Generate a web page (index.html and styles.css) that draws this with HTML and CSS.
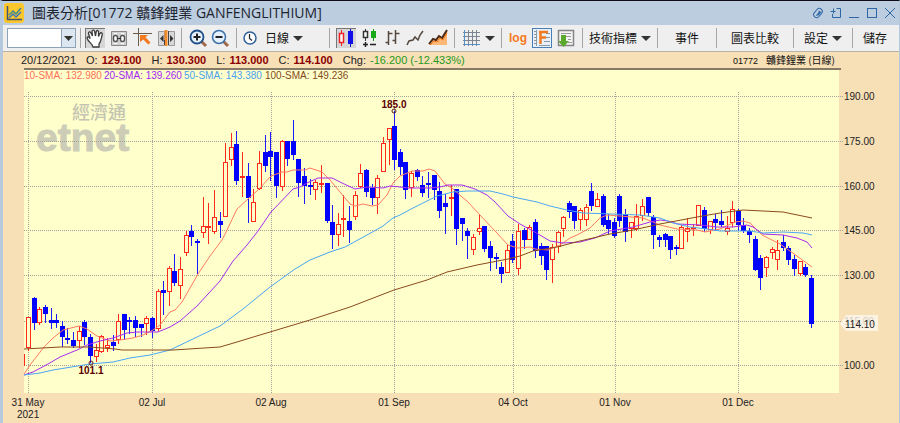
FILE: index.html
```html
<!DOCTYPE html>
<html lang="zh-Hant">
<head>
    <meta charset="UTF-8">
    <meta name="viewport" content="width=device-width, initial-scale=1.0">
    <title>圖表分析[01772 贛鋒鋰業 GANFENGLITHIUM]</title>
    <link rel="stylesheet" href="styles.css">
</head>
<body>
    <div class="window">
        <header class="titlebar">
            <svg class="app-icon" viewBox="0 0 20 20">
                <rect width="20" height="20" rx="3" fill="#fcc62d"/>
                <path d="M3.5 3v13.5H18" fill="none" stroke="#44536b" stroke-width="1.5"/>
                <path d="M5 12l4-4 3 3 5-6" fill="none" stroke="#3c8c8c" stroke-width="1.5"/>
                <path d="M5 15l4-4 3 3 5-5" fill="none" stroke="#3a78b8" stroke-width="1.5"/>
            </svg>
            <h1>圖表分析[01772 贛鋒鋰業 GANFENGLITHIUM]</h1>
            <div class="window-buttons">
                <button aria-label="Pin"><svg viewBox="0 0 12 12"><g transform="rotate(40 6 6)"><rect x="3" y="1" width="6" height="10" rx="3"/><path d="M5 4h1.500v5M7.500 3v5"/></g></svg></button>
                <button aria-label="Pop out"><svg viewBox="0 0 12 12"><path d="M6.500 1.500h4v9h-8V7M.5 4.500h5M3.500 1.500v5"/></svg></button>
                <button aria-label="Minimize"><svg viewBox="0 0 12 12"><path d="M1 10.500h10"/></svg></button>
                <button aria-label="Maximize"><svg viewBox="0 0 12 12"><rect x="1.500" y="1.500" width="9" height="9"/></svg></button>
                <button aria-label="Close"><svg viewBox="0 0 12 12"><path d="M1 1l10 10M11 1L1 11"/></svg></button>
            </div>
        </header>

        <nav class="toolbar">
            <div class="group group-tight">
                <select class="combo" aria-label="Stock code"><option></option></select>
            </div>
            <div class="group group-tools">
                <button class="tool pressed" aria-label="Pan"><svg viewBox="0 0 20 20"><path d="M8 19c0-3-5-5-6-9 .2-1.800 2-1.500 3.200.6L3.500 5.500c-.2-1.800 1.800-2.200 2.500-.5L7.500 8 7 3.500c.2-1.800 2.300-1.800 2.600 0L10.500 8l.8-4.500c.4-1.600 2.500-1.200 2.300.6L13.500 8.500l1.500-3c.9-1.400 2.700-.6 2.200 1.200-1 3.300-.7 6.300-3.200 9.300v3z" fill="#fff" stroke="#3c3c3c" stroke-width="1.300"/></svg></button>
                <button class="tool" aria-label="Fit"><svg viewBox="0 0 20 20"><path d="M2.500 3.500h15v14h-15z" fill="#d2d2d2" stroke="#888"/><path d="M5 5.500h3M12 5.500h3M5 15.500h3M12 15.500h3" stroke="#fff"/><rect x="4.500" y="7.500" width="4" height="6" rx="2" fill="#fff" stroke="#555" stroke-width="1.500"/><rect x="11.500" y="7.500" width="4" height="6" rx="2" fill="#fff" stroke="#555" stroke-width="1.500"/><path d="M8 10.500h4" stroke="#333"/></svg></button>
                <button class="tool" aria-label="Crosshair"><svg viewBox="0 0 20 20"><path d="M0 5.500h19M5.500 0v18" stroke="#6b5b4b"/><path d="M7 7h8l-2.500 2.200 5 5.300-2.200 2-5-5L7 14z" fill="#f47a20"/></svg></button>
                <button class="tool" aria-label="Spacing"><svg viewBox="0 0 20 20"><path d="M1.500 3.500h6v14h-6zM11.500 3.500h6v14h-6z" fill="#d8d8d8" stroke="#999"/><path d="M9 2v16" stroke="#f58a2a" stroke-width="3"/><path d="M11.500 3v14M7.500 12v5" stroke="#444"/><path d="M6.500 7v7L3 10.500zM13 7v7l3.500-3.500z" fill="#333"/></svg></button>
            </div>
            <div class="group group-zoom">
                <button class="tool" aria-label="Zoom in"><svg viewBox="0 0 20 20"><path d="M13 13l5 5" stroke="#a0694a" stroke-width="3"/><circle cx="9" cy="9" r="6.500" fill="#e6f1fb" stroke="#1f4f8a" stroke-width="1.800"/><path d="M5.500 9h7M9 5.500v7" stroke="#222" stroke-width="2"/></svg></button>
                <button class="tool" aria-label="Zoom out"><svg viewBox="0 0 20 20"><path d="M13 13l5 5" stroke="#a0694a" stroke-width="3"/><circle cx="9" cy="9" r="6.500" fill="#e6f1fb" stroke="#3b70ad" stroke-width="1.500"/><path d="M5.500 9h7" stroke="#222" stroke-width="2"/></svg></button>
            </div>
            <div class="group group-period">
                <button class="menu menu-period"><svg class="clock" viewBox="0 0 14 14"><circle cx="7" cy="7" r="6" fill="#fff" stroke="#2f6098" stroke-width="1.500"/><path d="M6.500 3v4.500L9 9.500" fill="none" stroke="#222" stroke-width="1.200"/></svg><span>日線</span><i class="caret"></i></button>
            </div>
            <div class="group group-style">
                <button class="tool pressed" aria-label="Candles"><svg viewBox="0 0 20 20"><path d="M5.500 2v16" stroke="#e22"/><rect x="3.500" y="5.500" width="4" height="9" fill="#fff" stroke="#e22" stroke-width="1.500"/><path d="M14.500 1v18" stroke="#11c"/><rect x="12" y="3" width="5" height="13" fill="#1010e8"/></svg></button>
                <button class="tool" aria-label="Volume candles"><svg viewBox="0 0 20 20"><path d="M6.500 1v12" stroke="#333"/><rect x="4.500" y="3.500" width="4" height="6" fill="#fff" stroke="#333" stroke-width="1.500"/><path d="M14.500 1v12" stroke="#191"/><rect x="12" y="3" width="5" height="7" fill="#18a818"/><path d="M4 16.500h5M6.500 14v5M11 16.500h6" stroke="#222" stroke-width="1.500"/></svg></button>
                <button class="tool" aria-label="OHLC bars"><svg viewBox="0 0 20 20"><path d="M6.500 3v14M3.500 14.500h3M6.500 5.500h4M13.500 2v14M10.500 12.500h3M13.500 5.500h4" stroke="#54483e" stroke-width="1.500"/></svg></button>
                <button class="tool" aria-label="Line"><svg viewBox="0 0 20 20"><path d="M2 17l2-4 4-1 2-3 3 3 2-5 3-4" fill="none" stroke="#54483e" stroke-width="1.500"/></svg></button>
                <button class="tool" aria-label="Area"><svg viewBox="0 0 20 20"><path d="M1 17l4-5 3 1 3-5 3 3 5-9v15z" fill="#fdb878"/><path d="M1 16l4-5 3 1 3-4 3 2 5-8" fill="none" stroke="#4c2a16" stroke-width="2"/><path d="M2 17l4-4 3 1 3-4 3 2 4-7" fill="none" stroke="#f27316"/></svg></button>
            </div>
            <div class="group">
                <button class="menu" aria-label="Grid"><svg class="grid-icon" viewBox="0 0 20 20"><path d="M3.500 2v16M7.500 2v16M11.500 2v16M15.500 2v16M2 4.500h17M2 8.500h17M2 12.500h17M2 16.500h17" stroke="#7d8590"/><path d="M3.500 2v14.500H19" fill="none" stroke="#5591c8"/></svg><i class="caret"></i></button>
            </div>
            <div class="group group-tools2">
                <button class="tool log">log</button>
                <button class="tool selected" aria-label="F"><svg viewBox="0 0 20 20"><path d="M4.500 2v16M2 3.500h3M2 6.500h3M2 9.500h3M2 12.500h3M2 15.500h3M14 5.500h4M14 9.500h4M12 13.500h6M7 17.500h11" stroke="#8b98a5"/><path d="M8.500 16V4M7 4h9M8 9.500h6" fill="none" stroke="#f47a20" stroke-width="2.500"/></svg></button>
                <button class="tool" aria-label="Download"><svg viewBox="0 0 20 20"><path d="M2.500 2.500h15v15h-15z" fill="#f4f4f4" stroke="#858585" stroke-width="1.500"/><path d="M5 5.500h10M5 8.500h10M12 11.500h3M12 14.500h4" stroke="#999"/><path d="M5 7h5v6h3l-5.500 6L2 13h3z" fill="#5aa92c"/></svg></button>
            </div>
            <div class="group"><button class="menu">技術指標<i class="caret"></i></button></div>
            <div class="group group-event"><button class="menu">事件</button></div>
            <div class="group group-compare"><button class="menu">圖表比較</button></div>
            <div class="group group-end"><button class="menu">設定<i class="caret"></i></button></div>
            <div class="group group-end"><button class="menu">儲存</button></div>
        </nav>

        <section class="quote">
            <span class="date">20/12/2021</span>
            <span class="item">O:<b>129.100</b></span>
            <span class="item">H:<b>130.300</b></span>
            <span class="item">L:<b>113.000</b></span>
            <span class="item">C:<b>114.100</b></span>
            <span class="item">Chg:<span class="change">-16.200 (-12.433%)</span></span>
            <span class="stock"><span class="code">01772</span>贛鋒鋰業 (日線)</span>
        </section>

        <svg class="chart" viewBox="3 68 896 355" role="img" aria-label="01772 日線">
            <clipPath id="plotArea"><rect x="24" y="69" width="815" height="324"/></clipPath>
            <rect class="plot" x="24" y="69" width="815" height="324"/>
            <path class="rule" d="M24 69h817"/>

            <text class="mark-cjk" x="72" y="119">經濟通</text>
            <text class="mark" x="36" y="151">etnet</text>

            <g id="grid"></g>

            <text class="legend" y="79">
                <tspan class="sma10" x="24">10-SMA: 132.980</tspan>
                <tspan class="sma20" x="104">20-SMA: 139.260</tspan>
                <tspan class="sma50" x="184">50-SMA: 143.380</tspan>
                <tspan class="sma100" x="265">100-SMA: 149.236</tspan>
            </text>

            <g id="candles" clip-path="url(#plotArea)"></g>

            <polyline class="line line10" points="24,374 30,365 44,347 53,338 63,330 79,326 87,329 97,336 110,341 120,340 133,338 143,335 153,330 160,325 170,312 175,310 182,302 198,274 210,256 222,240 227,230 237,209 248,199 258,190 271,176 282,172 287,172 293,170 305,170 310,168 322,172 330,180 340,192 350,204 355,206 363,204 372,206 378,205 387,195 393,183 400,176 412,171 423,171 429,169 435,171 445,184 452,188 462,197 467,201 480,215 495,231 508,245 518,248 530,247 535,249 548,250 560,245 570,238 577,235 590,228 600,218 607,215 620,216 643,218 653,222 660,225 677,229 697,230 705,232 720,229 735,222 743,221 750,223 762,235 780,244 797,256 812,267"/>
            <polyline class="line line20" points="24,375 33,372 48,364 60,357 77,350 87,345 100,341 113,338 127,333 137,332 158,332 170,327 180,321 197,306 220,281 233,261 247,245 258,231 271,212 293,189 300,187 307,183 318,178 332,178 342,183 355,189 367,187 383,188 390,186 400,187 408,188 430,188 440,187 448,185 462,185 475,189 487,195 495,202 508,216 520,224 533,231 550,241 563,243 580,242 595,238 610,231 633,227 650,222 660,220 668,221 678,224 700,225 717,227 733,227 747,225 753,227 763,234 783,235 797,238 807,242 812,248"/>
            <polyline class="line line50" points="24,375 40,373 53,370 90,364 113,362 130,358 150,355 170,350 197,337 220,326 243,309 270,287 295,269 310,260 330,252 345,247 367,235 383,226 393,218 400,215 413,208 437,196 453,192 467,191 490,191 503,194 513,197 537,202 550,206 567,210 583,213 640,215 660,218 673,223 690,227 707,229 720,231 750,231 763,233 783,232 803,233 812,235"/>
            <polyline class="line line100" points="24,349 60,347 90,347 115,349 122,350 150,350 173,350 220,347 237,342 250,338 270,332 310,320 350,307 394,290 427,280 447,272 477,265 508,259 520,256 533,251 557,247 580,241 610,234 633,230 660,224 697,217 720,213 743,210 783,212 812,218"/>

            <circle class="dot" cx="394" cy="111" r="2"/>
            <text class="callout" x="394" y="108">185.0</text>
            <circle class="dot" cx="91" cy="363" r="2"/>
            <text class="callout" x="91" y="374">101.1</text>

            <g id="axis"></g>
            <text class="axis-text" x="17" y="418">2021</text>

            <path class="tag" d="M840 324l6-9h32v16h-32z"/>
            <text class="axis-text" x="845" y="328">114.10</text>
        </svg>
    </div>

    <script>
        const NS = 'http://www.w3.org/2000/svg';

        function add(parent, name, attrs, text) {
            const el = document.createElementNS(NS, name);
            for (const key in attrs) el.setAttribute(key, attrs[key]);
            if (text) el.textContent = text;
            parent.appendChild(el);
        }

        const priceTicks = [[190, 96], [175, 141], [160, 186], [145, 230], [130, 275], [115, 321], [100, 365]];
        const dateTicks = [['31 May', 28], ['02 Jul', 152], ['02 Aug', 271], ['01 Sep', 394], ['04 Oct', 513], ['01 Nov', 615], ['01 Dec', 738]];

        // high, body top, body bottom, low, 1 = up / 0 = down
        const days = [
            [354,354,365,365,1],[317,317,347,350,1],[297,298,323,329,0],[307,309,322,324,1],[305,307,314,322,0],
            [308,320,323,328,0],[314,320,323,327,0],[321,326,337,346,0],[328,338,340,343,0],[332,340,346,347,0],
            [326,331,340,347,1],[320,322,337,344,0],[334,337,356,362,0],[344,350,356,361,1],[335,336,351,352,1],
            [338,345,347,351,1],[335,342,346,350,0],[314,321,339,343,1],[314,314,330,339,0],[317,320,322,333,0],
            [316,320,328,336,0],[324,324,328,336,0],[316,318,323,334,1],[317,318,331,337,0],[289,291,328,330,1],
            [281,290,293,314,0],[266,268,291,305,1],[254,271,283,285,0],[257,269,285,298,1],[231,235,252,255,1],
            [225,231,237,245,0],[239,241,243,273,0],[197,226,232,237,1],[203,226,227,243,1],[190,217,231,233,1],
            [212,221,225,237,0],[143,162,216,216,1],[133,147,159,165,1],[131,144,181,184,0],[152,176,177,196,1],
            [163,176,198,222,0],[189,202,221,221,1],[151,163,188,189,1],[135,152,166,171,0],[132,151,157,180,0],
            [152,152,186,197,0],[140,141,186,190,1],[141,141,159,165,0],[120,141,155,159,0],[159,159,183,196,0],
            [168,176,186,203,0],[179,185,187,194,0],[180,182,189,199,1],[165,183,184,192,1],[183,183,221,222,0],
            [205,222,235,248,0],[213,224,234,245,1],[195,218,219,236,1],[206,221,230,242,0],[191,195,216,219,1],
            [164,173,186,187,1],[169,170,192,196,0],[184,188,198,204,0],[175,178,197,213,1],[137,143,171,171,1],
            [128,128,139,164,1],[111,126,160,169,0],[149,152,167,174,0],[162,162,190,198,0],[171,173,187,196,1],
            [169,170,177,180,0],[176,185,193,196,0],[172,183,185,197,0],[175,175,190,199,0],[182,191,211,217,0],
            [194,203,207,233,0],[185,197,198,215,1],[189,189,229,244,0],[218,218,224,240,0],[228,231,236,258,0],
            [234,237,249,254,1],[214,228,231,234,1],[226,226,249,251,0],[241,246,258,270,0],[253,257,259,268,0],
            [262,267,274,282,0],[245,250,272,272,1],[234,241,260,262,0],[224,231,268,274,1],[228,230,240,248,0],
            [225,227,239,239,1],[219,222,251,257,0],[243,246,256,264,0],[246,246,270,279,0],[244,247,259,282,1],
            [231,232,246,252,1],[216,217,228,236,1],[201,203,212,217,0],[206,206,221,228,0],[208,210,219,229,1],
            [204,207,219,225,1],[183,191,206,210,0],[193,199,206,206,1],[194,196,225,226,0],[214,220,229,233,0],
            [218,222,236,237,0],[194,196,221,226,0],[209,214,232,241,0],[222,222,228,237,1],[204,216,228,230,1],
            [199,206,215,220,1],[197,197,213,215,0],[215,217,235,248,0],[235,237,240,246,0],[233,234,240,246,0],
            [236,236,250,258,0],[245,247,249,254,0],[225,227,248,248,1],[218,228,231,241,1],[224,227,228,235,1],
            [205,205,225,225,1],[207,210,229,231,0],[221,221,229,233,1],[214,219,223,230,0],[210,221,225,226,0],
            [216,228,231,234,1],[201,209,222,226,1],[209,211,225,230,0],[218,225,231,232,0],[228,231,235,242,0],
            [236,239,270,270,0],[255,258,278,289,0],[256,257,267,276,1],[247,249,252,258,1],[240,250,259,269,1],
            [235,242,248,250,0],[246,248,260,264,0],[255,259,269,275,0],[261,261,273,275,1],[264,267,275,276,0],
            [275,278,324,327,0]
        ];

        const grid = document.getElementById('grid');
        const axis = document.getElementById('axis');
        const candles = document.getElementById('candles');

        priceTicks.forEach(([price, y]) => {
            add(grid, 'path', { class: 'grid-line', d: `M24 ${y + 0.5}H843` });
            add(axis, 'text', { class: 'axis-text', x: 844, y: y + 4 }, price.toFixed(2));
        });

        dateTicks.forEach(([label, x]) => {
            add(grid, 'path', { class: 'grid-line', d: `M${x + 0.5} 92V393` });
            add(axis, 'text', { class: 'axis-text middle', x: x, y: 406 }, label);
        });

        days.forEach(([high, top, bottom, low, up], i) => {
            const x = Math.floor(22.9 + i * 5.633);
            const color = up ? 'up' : 'down';
            add(candles, 'path', { class: 'wick ' + color, d: `M${x + 0.5} ${high}V${top}M${x + 0.5} ${bottom}V${low + 1}` });
            if (up) {
                add(candles, 'rect', { class: 'body up', x: x - 1.5, y: top + 0.5, width: 4, height: bottom - top });
            } else {
                add(candles, 'rect', { class: 'body down', x: x - 2, y: top, width: 5, height: Math.max(bottom - top, 2) });
            }
        });
    </script>
</body>
</html>
```
FILE: styles.css
```css
* {
    box-sizing: border-box;
}
body {
    margin: 0;
    background: #f7dfb6;
    color: #222;
    font-family: "Liberation Sans", "Noto Sans CJK TC", Arial, sans-serif;
    font-size: 11px;
}
.window {
    border-top: 1px solid #0c0c14;
    border-left: 3px solid #b5c9de;
    border-right: 1px solid #b5c9de;
}
button {
    border: 0;
    padding: 0;
    background: none;
    color: inherit;
    font: inherit;
}

/* title bar */
.titlebar {
    display: flex;
    align-items: center;
    height: 24px;
    padding: 0 3px 0 1px;
    background: #bccddf;
}
.app-icon {
    width: 20px;
    height: 20px;
    margin-right: 8px;
}
h1 {
    flex: 1;
    margin: 0;
    color: #1c2430;
    font-family: "Open Sans", "Noto Sans CJK TC", sans-serif;
    font-size: 14px;
    font-weight: 400;
    line-height: 24px;
    white-space: nowrap;
}
.window-buttons {
    display: flex;
    gap: 6px;
}
.window-buttons button {
    width: 12px;
    height: 12px;
}
.window-buttons svg {
    display: block;
    fill: none;
    stroke: #2f66a3;
}

/* toolbar */
.toolbar {
    display: flex;
    align-items: center;
    height: 27px;
    background: #efefef;
    border-bottom: 1px solid #b9b2a8;
}
.group {
    display: flex;
    align-items: center;
    height: 20px;
    padding: 0 6px;
    border-right: 1px solid #a5a5a5;
}
.group:last-child {
    border-right: 0;
}
.group-tight {
    padding: 0 4px;
}
.group-tools {
    gap: 4px;
    padding: 0 4px;
}
.group-zoom {
    gap: 2px;
}
.group-period {
    padding-right: 26px;
}
.group-style {
    gap: 3px;
}
.group-tools2 {
    gap: 4px;
}
.group-event {
    padding: 0 17px;
}
.group-compare {
    padding: 0 14px;
}
.group-end {
    padding: 0 10px;
}
.combo {
    width: 69px;
    height: 20px;
    appearance: none;
    border: 1px solid #8fa3b8;
    border-radius: 0;
    background: #fff url("data:image/svg+xml,%3Csvg xmlns='http://www.w3.org/2000/svg' width='14' height='18'%3E%3Cpath d='M0 0h14v18H0z' fill='%23dce6f0'/%3E%3Cpath d='M.5 0v18' stroke='%238fa3b8'/%3E%3Cpath d='M3 7h9l-4.500 5z' fill='%23333'/%3E%3C/svg%3E") no-repeat right center;
}
.tool {
    width: 20px;
    height: 20px;
}
.tool svg {
    display: block;
    fill: none;
}
.pressed {
    background: #d6d6d6;
    box-shadow: inset 1px 1px #777;
}
.selected {
    background: #e8f1fa;
    box-shadow: inset 0 0 0 1px #4a7fb5;
}
.log {
    color: #f57a1c;
    font-size: 12px;
    font-weight: 700;
}
.menu {
    display: flex;
    align-items: center;
    gap: 4px;
    font-family: "Noto Sans CJK TC", sans-serif;
    font-size: 12px;
    line-height: 20px;
    color: #111;
    white-space: nowrap;
}
.menu-period span {
    margin-left: 4px;
}
.clock {
    width: 14px;
    height: 14px;
}
.grid-icon {
    width: 20px;
    height: 20px;
}
.caret {
    border: 5px solid transparent;
    border-top-color: #333;
    border-bottom: 0;
}

/* quote line */
.quote {
    display: flex;
    align-items: center;
    height: 16px;
    padding-left: 18px;
    padding-right: 64px;
    background: #f7dfb6;
    white-space: nowrap;
}
.date,
.item {
    margin-right: 10px;
}
.item b,
.change {
    margin-left: 4px;
}
.item b {
    color: #8b0000;
}
.change {
    color: #1f9a1f;
}
.stock {
    margin-left: auto;
    color: #111;
    font-family: "Noto Sans CJK TC", sans-serif;
    font-size: 10px;
    line-height: 16px;
}
.code {
    margin-right: 8px;
    font-family: "Liberation Sans", Arial, sans-serif;
    font-size: 9px;
}

/* chart */
.chart {
    display: block;
    width: 100%;
    background: #f7dfb6;
    font-family: "Liberation Sans", Arial, sans-serif;
    font-size: 10px;
}
.plot {
    fill: #ffffcc;
}
.rule {
    stroke: #857a66;
    stroke-width: 2;
}
.grid-line {
    stroke: #a3a39b;
    stroke-dasharray: 1 1;
    shape-rendering: crispEdges;
}
.mark {
    fill: #cdcdb7;
    stroke: #cdcdb7;
    font-size: 39px;
    font-weight: 700;
}
.mark-cjk {
    fill: #c4c4b0;
    font-family: "Noto Sans CJK TC", sans-serif;
    font-size: 18px;
    font-weight: 500;
}
.sma10 {
    fill: #ff6f5a;
}
.sma20 {
    fill: #a01ff0;
}
.sma50 {
    fill: #4aa0ee;
}
.sma100 {
    fill: #854a1c;
}
.line {
    fill: none;
    stroke-width: 1;
}
.line10 {
    stroke: #ff7a62;
}
.line20 {
    stroke: #a62cf0;
}
.line50 {
    stroke: #4ba6f2;
}
.line100 {
    stroke: #8b4a1c;
}
.wick,
.body {
    shape-rendering: crispEdges;
}
.wick.up,
.body.up {
    stroke: #ff2a1c;
}
.body.up {
    fill: #ffffcc;
}
.wick.down {
    stroke: #1c1cff;
}
.body.down {
    fill: #0000ff;
}
.dot {
    fill: none;
    stroke: #5a1a1a;
}
.callout {
    fill: #5a0000;
    font-weight: 700;
    text-anchor: middle;
}
.axis-text {
    fill: #222;
}
.middle {
    text-anchor: middle;
}
.tag {
    fill: #fdf7ee;
    fill-opacity: 0.8;
}
```
